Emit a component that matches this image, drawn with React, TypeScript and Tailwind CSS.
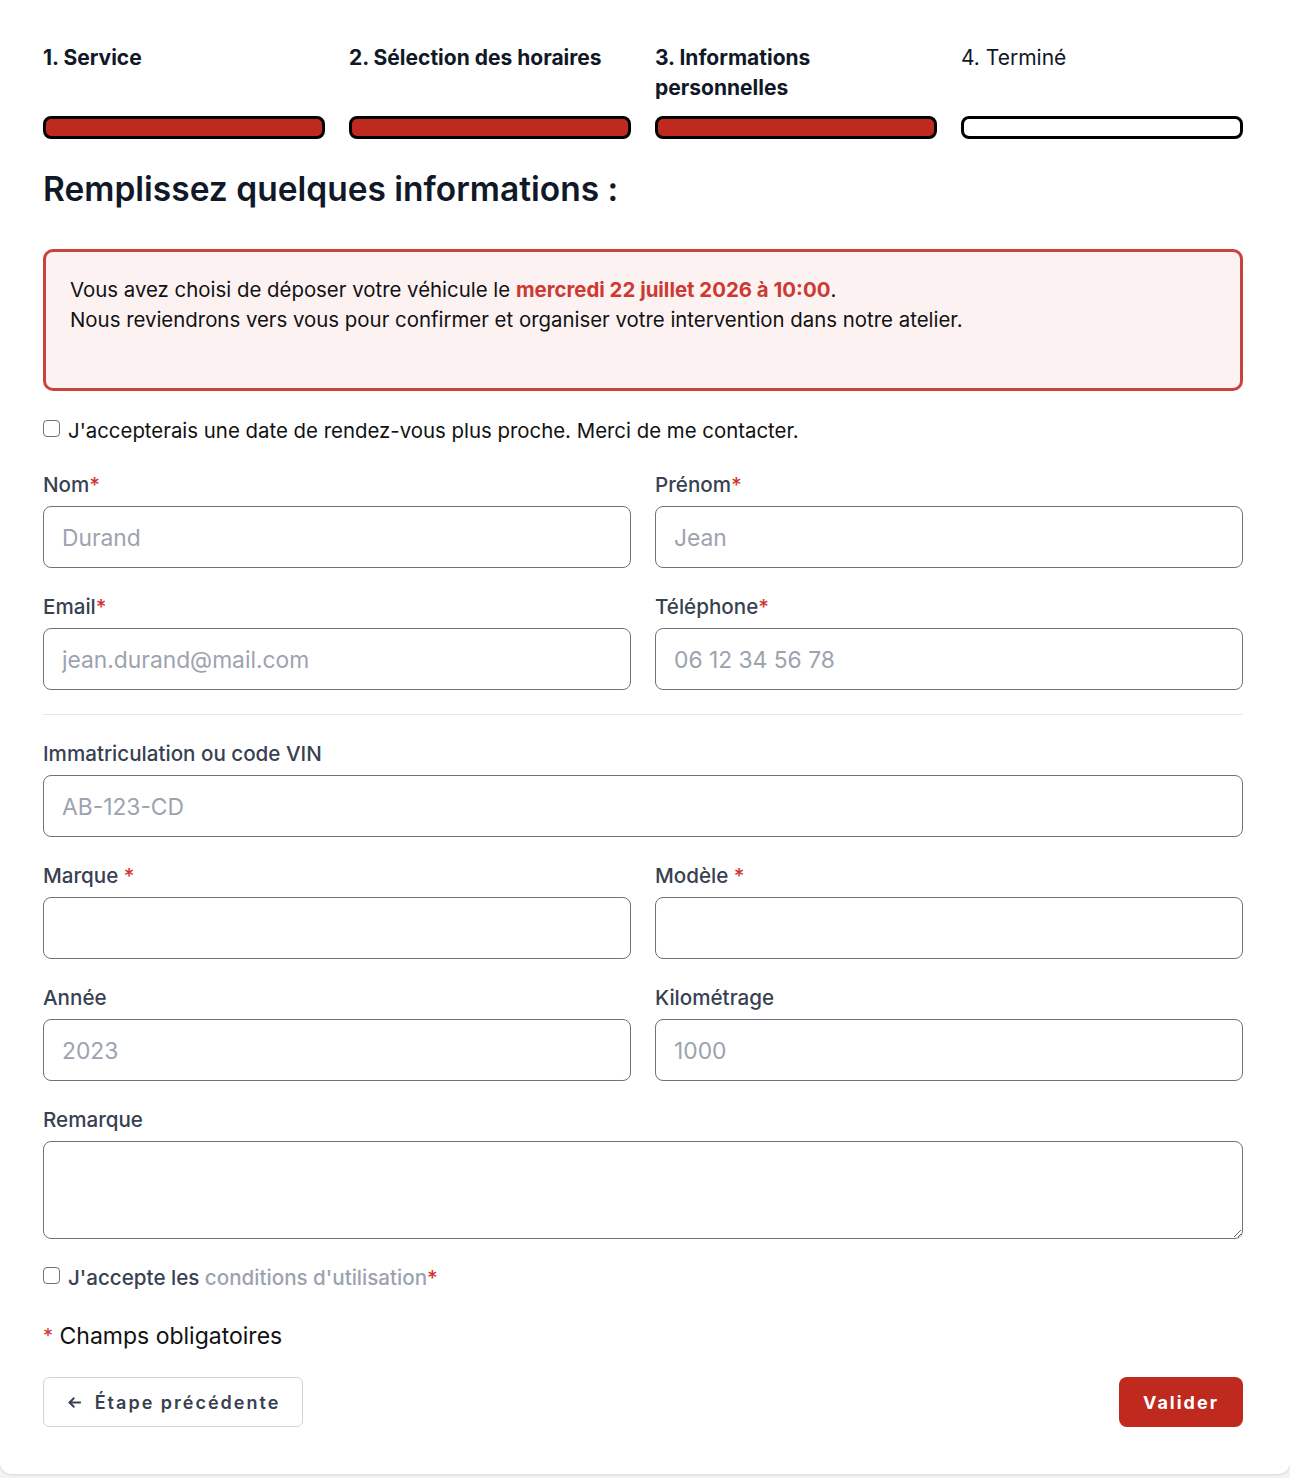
import React from 'react';

const steps = [
  { label: '1. Service', done: true },
  { label: '2. Sélection des horaires', done: true },
  { label: '3. Informations personnelles', done: true },
  { label: '4. Terminé', done: false },
];

const Req = ({ space }: { space?: boolean }) => (
  <span className="text-[#d0332d]">{space ? ' *' : '*'}</span>
);

const Field = ({
  label,
  required,
  spaced,
  placeholder,
}: {
  label: string;
  required?: boolean;
  spaced?: boolean;
  placeholder?: string;
}) => (
  <div className="flex flex-col">
    <label className="text-[20.6px] leading-7 font-medium text-[#374151] mb-[7px]">
      {label}
      {required && <Req space={spaced} />}
    </label>
    <input
      type="text"
      placeholder={placeholder}
      className="h-[62px] w-full rounded-lg border border-[#6b7280] bg-white px-[18px] text-[22.8px] text-[#111827] placeholder:text-[#9ca3af] outline-none"
    />
  </div>
);

const Checkbox = () => (
  <input
    type="checkbox"
    className="appearance-none w-[17px] h-[17px] shrink-0 rounded-[4px] border border-[#6b7280] bg-white mt-[3px]"
  />
);

export default function App() {
  return (
    <div className="min-h-screen bg-[#f3f4f6]" style={{ fontFamily: 'Inter, "Noto Sans", sans-serif' }}>
      <div className="bg-white rounded-b-xl shadow-[0_1px_3px_rgba(0,0,0,0.12)] pt-[43px] pb-[47px] pl-[43px] pr-[47px]">
        {/* Steps */}
        <div className="grid grid-cols-4 gap-x-6">
          {steps.map((s, i) => (
            <div key={i} className="flex flex-col">
              <div
                className={`text-[21px] leading-[30px] text-[#111827] min-h-[60px] ${
                  s.done ? 'font-bold' : 'font-normal'
                }`}
              >
                {s.label}
              </div>
              <div
                className={`mt-[13px] h-[23px] rounded-lg border-[3px] border-black ${
                  s.done ? 'bg-[#c0291e]' : 'bg-white'
                }`}
              />
            </div>
          ))}
        </div>

        <h1 className="mt-[30px] text-[33.5px] leading-10 font-semibold text-[#111827]">
          Remplissez quelques informations :
        </h1>

        {/* Alert */}
        <div className="mt-10 rounded-[10px] border-[3px] border-[#c9423b] bg-[#fdf2f2] pl-[24px] pr-6 pt-[23px] pb-[53px] text-[20.4px] leading-[30px] text-[#111111]">
          <p>
            Vous avez choisi de déposer votre véhicule le{' '}
            <span className="font-bold text-[#cc3a33]">mercredi 22 juillet 2026 à 10:00</span>.
          </p>
          <p>Nous reviendrons vers vous pour confirmer et organiser votre intervention dans notre atelier.</p>
        </div>

        <label className="mt-[26px] flex items-start gap-2 text-[20.4px] leading-7 text-[#111111]">
          <Checkbox />
          <span>J'accepterais une date de rendez-vous plus proche. Merci de me contacter.</span>
        </label>

        {/* Contact */}
        <div className="mt-[26px] grid grid-cols-2 gap-x-6 gap-y-[25px]">
          <Field label="Nom" required placeholder="Durand" />
          <Field label="Prénom" required placeholder="Jean" />
          <Field label="Email" required placeholder="jean.durand@mail.com" />
          <Field label="Téléphone" required placeholder="06 12 34 56 78" />
        </div>

        <div className="mt-6 border-t border-[#e5e7eb]" />

        {/* Vehicle */}
        <div className="mt-[25px] flex flex-col gap-[25px]">
          <Field label="Immatriculation ou code VIN" placeholder="AB-123-CD" />
          <div className="grid grid-cols-2 gap-x-6 gap-y-[25px]">
            <Field label="Marque" required spaced />
            <Field label="Modèle" required spaced />
            <Field label="Année" placeholder="2023" />
            <Field label="Kilométrage" placeholder="1000" />
          </div>
          <div className="flex flex-col">
            <label className="text-[20.6px] leading-7 font-medium text-[#374151] mb-[7px]">Remarque</label>
            <textarea className="h-[98px] w-full rounded-lg border border-[#6b7280] bg-white px-[18px] py-3 text-[22px] outline-none" />
          </div>
        </div>

        <label className="mt-[25px] flex items-start gap-2 text-[20.6px] leading-7 font-medium text-[#374151]">
          <Checkbox />
          <span>
            J'accepte les <span className="text-[#9ca3af]">conditions d'utilisation</span>
            <Req />
          </span>
        </label>

        <p className="mt-7 text-[23px] leading-8 text-[#111111]">
          <span className="text-[#d0332d] text-[20px] align-top">*</span> Champs obligatoires
        </p>

        <div className="mt-[25px] flex items-center justify-between">
          <button className="h-[50px] w-[260px] rounded-md border border-[#d1d5db] bg-white flex items-center justify-center gap-3 text-[18px] font-semibold tracking-[2px] text-[#374151]">
            <svg width="17" height="17" viewBox="0 0 24 24" fill="none" stroke="currentColor" strokeWidth="2.75" strokeLinecap="round" strokeLinejoin="round">
              <path d="M20 12H5" />
              <path d="M11 18l-6-6 6-6" />
            </svg>
            Étape précédente
          </button>
          <button className="h-[50px] w-[124px] rounded-lg bg-[#c0291e] text-white text-[18px] font-bold tracking-[2px]">
            Valider
          </button>
        </div>
      </div>
    </div>
  );
}
